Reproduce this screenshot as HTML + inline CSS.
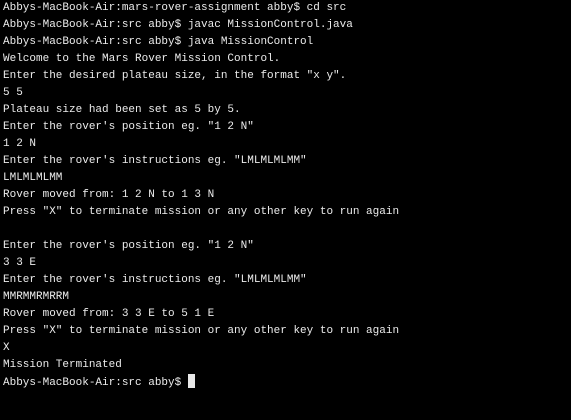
<!DOCTYPE html>
<html><head><style>
html,body{margin:0;padding:0;background:#000;width:571px;height:420px;overflow:hidden}
pre{margin:0;position:absolute;left:3px;top:0px;font-family:"Liberation Mono",monospace;font-size:11px;line-height:17px;color:#ececec;white-space:pre}
.cur{display:inline-block;width:7px;height:14px;background:#e8e8e8;vertical-align:-3px}
</style></head><body><pre>Abbys-MacBook-Air:mars-rover-assignment abby$ cd src
Abbys-MacBook-Air:src abby$ javac MissionControl.java
Abbys-MacBook-Air:src abby$ java MissionControl
Welcome to the Mars Rover Mission Control.
Enter the desired plateau size, in the format "x y".
5 5
Plateau size had been set as 5 by 5.
Enter the rover's position eg. "1 2 N"
1 2 N
Enter the rover's instructions eg. "LMLMLMLMM"
LMLMLMLMM
Rover moved from: 1 2 N to 1 3 N
Press "X" to terminate mission or any other key to run again

Enter the rover's position eg. "1 2 N"
3 3 E
Enter the rover's instructions eg. "LMLMLMLMM"
MMRMMRMRRM
Rover moved from: 3 3 E to 5 1 E
Press "X" to terminate mission or any other key to run again
X
Mission Terminated
Abbys-MacBook-Air:src abby$ <span class="cur"></span></pre></body></html>
